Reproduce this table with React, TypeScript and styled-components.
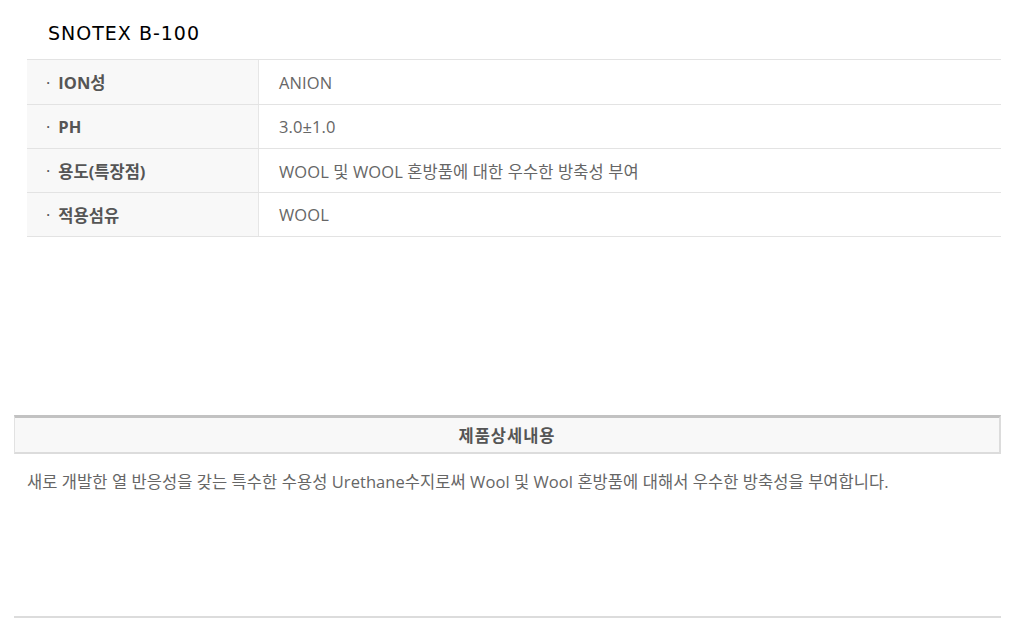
import React from "react";
import styled, { createGlobalStyle } from "styled-components";

const Global = createGlobalStyle`
  html, body { margin: 0; padding: 0; background: #fff; }
  body { font-family: "Open Sans", "Noto Sans CJK KR", sans-serif; }
`;

const Page = styled.div`
  width: 1018px;
  height: 632px;
  display: flex;
  flex-direction: column;
  box-sizing: border-box;
  padding-right: 17px;
`;

const Title = styled.h1`
  margin: 0;
  height: 59px;
  box-sizing: border-box;
  padding: 20px 0 0 48px;
  font-family: "DejaVu Sans", "Noto Sans CJK KR", sans-serif;
  font-weight: normal;
  font-size: 19px;
  line-height: 26px;
  color: #000;
  letter-spacing: 1px;
`;

const Table = styled.div`
  margin-left: 27px;
  border-top: 1px solid #e3e3e3;
  display: flex;
  flex-direction: column;
`;

const Row = styled.div<{ $h: number }>`
  display: grid;
  grid-template-columns: 232px 1fr;
  height: ${(p) => p.$h}px;
  border-bottom: 1px solid #e3e3e3;
`;

const Label = styled.div`
  background: #f8f8f8;
  border-right: 1px solid #e6e6e6;
  display: flex;
  align-items: center;
  padding-left: 19px;
  font-size: 16.5px;
  font-weight: bold;
  color: #555;
`;

const Dot = styled.span`
  font-weight: normal;
  margin-right: 8px;
  color: #555;
`;

const Value = styled.div`
  display: flex;
  align-items: center;
  padding-left: 20px;
  font-size: 16.5px;
  color: #666;
  letter-spacing: 0.1px;
`;

const Spacer = styled.div<{ $h: number }>`
  height: ${(p) => p.$h}px;
  flex: none;
`;

const SectionHead = styled.div`
  margin-left: 14px;
  height: 34px;
  border-top: 3px solid #c2c2c2;
  border-left: 1px solid #e2e2e2;
  border-right: 2px solid #dcdcdc;
  border-bottom: 2px solid #dcdcdc;
  background: #f8f8f8;
  display: flex;
  align-items: center;
  justify-content: center;
  font-size: 16.5px;
  font-weight: bold;
  color: #555;
  letter-spacing: 1px;
`;

const Description = styled.p`
  margin: 17px 0 0 27px;
  font-size: 16.5px;
  line-height: 22px;
  color: #666;
  letter-spacing: 0.06px;
`;

const BottomRule = styled.div`
  margin-left: 14px;
  height: 2px;
  background: #dcdcdc;
  margin-top: auto;
  margin-bottom: 14px;
`;

const rows = [
  { label: "ION성", value: "ANION", h: 44 },
  { label: "PH", value: "3.0±1.0", h: 43 },
  { label: "용도(특장점)", value: "WOOL 및 WOOL 혼방품에 대한 우수한 방축성 부여", h: 43 },
  { label: "적용섬유", value: "WOOL", h: 43 },
];

export default function App() {
  return (
    <>
      <Global />
      <Page>
        <Title>SNOTEX B-100</Title>
        <Table>
          {rows.map((r) => (
            <Row key={r.label} $h={r.h}>
              <Label>
                <Dot>·</Dot>
                {r.label}
              </Label>
              <Value>{r.value}</Value>
            </Row>
          ))}
        </Table>
        <Spacer $h={178} />
        <SectionHead>제품상세내용</SectionHead>
        <Description>
          새로 개발한 열 반응성을 갖는 특수한 수용성 Urethane수지로써 Wool 및 Wool 혼방품에 대해서 우수한 방축성을 부여합니다.
        </Description>
        <BottomRule />
      </Page>
    </>
  );
}
